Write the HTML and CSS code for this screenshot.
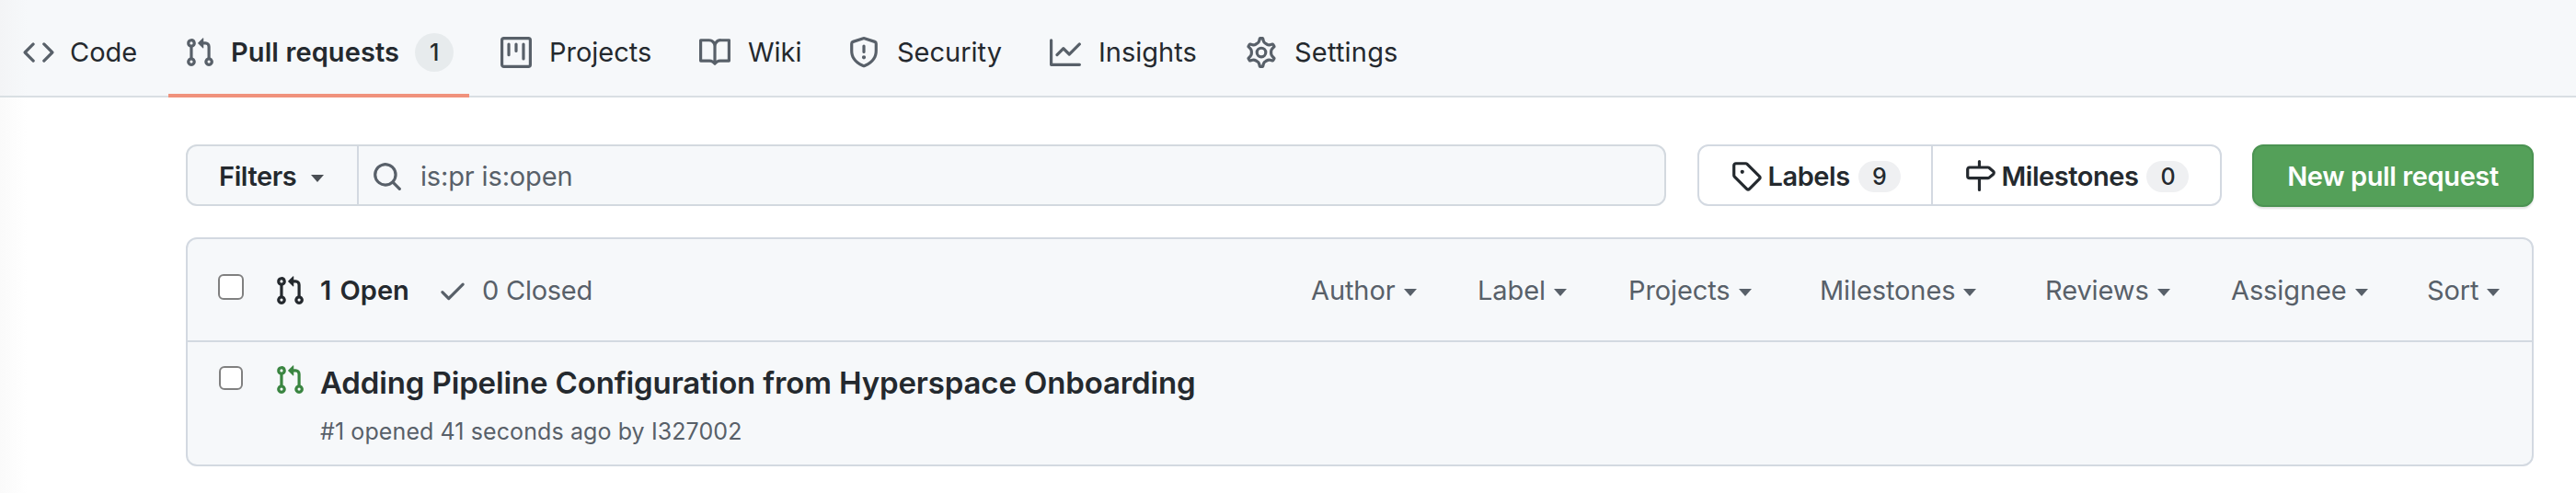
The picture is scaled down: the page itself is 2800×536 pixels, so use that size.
FILE: index.html
```html
<!DOCTYPE html>
<html lang="en">
<head>
<meta charset="utf-8">
<title>Pull requests</title>
<link rel="stylesheet" href="styles.css">
</head>
<body>
<svg width="0" height="0" class="sprite" aria-hidden="true">
  <symbol id="pr" viewBox="0 0 16 16"><path d="M7.177 3.073L9.573.677A.25.25 0 0110 .854v4.792a.25.25 0 01-.427.177L7.177 3.427a.25.25 0 010-.354zM3.75 2.5a.75.75 0 100 1.5.75.75 0 000-1.5zm-2.25.75a2.25 2.25 0 113 2.122v5.256a2.251 2.251 0 11-1.5 0V5.372A2.25 2.25 0 011.5 3.25zM11 2.5h-1V4h1a1 1 0 011 1v5.628a2.251 2.251 0 101.5 0V5A2.5 2.5 0 0011 2.5zm1 10.25a.75.75 0 111.5 0 .75.75 0 01-1.5 0zM3.75 12a.75.75 0 100 1.5.75.75 0 000-1.5z"/></symbol>
</svg>
<nav class="tabs">
  <a class="tab"><svg class="icon" viewBox="0 0 16 16"><path d="M4.72 3.22a.75.75 0 011.06 1.06L2.06 8l3.72 3.72a.75.75 0 11-1.06 1.06L.47 8.53a.75.75 0 010-1.06l4.25-4.25zm6.56 0a.75.75 0 10-1.06 1.06L13.94 8l-3.72 3.72a.75.75 0 101.06 1.06l4.25-4.25a.75.75 0 000-1.06l-4.25-4.25z"/></svg><span>Code</span></a>
  <a class="tab selected"><svg class="icon"><use href="#pr"/></svg><span class="tab-name">Pull requests</span><span class="count">1</span></a>
  <a class="tab"><svg class="icon" viewBox="0 0 16 16"><path d="M1.75 0A1.75 1.75 0 000 1.75v12.5C0 15.216.784 16 1.75 16h12.5A1.75 1.75 0 0016 14.25V1.75A1.75 1.75 0 0014.25 0H1.75zM1.5 1.75a.25.25 0 01.25-.25h12.5a.25.25 0 01.25.25v12.5a.25.25 0 01-.25.25H1.75a.25.25 0 01-.25-.25V1.75zM11.75 3a.75.75 0 00-.75.75v7.5a.75.75 0 001.5 0v-7.5a.75.75 0 00-.75-.75zm-8.25.75a.75.75 0 011.5 0v5.5a.75.75 0 01-1.5 0v-5.5zM8 3a.75.75 0 00-.75.75v3.5a.75.75 0 001.5 0v-3.5A.75.75 0 008 3z"/></svg><span>Projects</span></a>
  <a class="tab"><svg class="icon" viewBox="0 0 16 16"><path fill-rule="evenodd" d="M0 1.75A.75.75 0 01.75 1h4.253c1.227 0 2.317.59 3 1.501A3.744 3.744 0 0111.006 1h4.245a.75.75 0 01.75.75v10.5a.75.75 0 01-.75.75h-4.507a2.25 2.25 0 00-1.591.659l-.622.621a.75.75 0 01-1.06 0l-.622-.621A2.25 2.25 0 005.258 13H.75a.75.75 0 01-.75-.75V1.75zm8.755 3a2.25 2.25 0 012.25-2.25H14.5v9h-3.757c-.71 0-1.4.201-1.992.572l.004-7.322zm-1.504 7.324l.004-5.073-.002-2.253A2.25 2.25 0 005.003 2.5H1.5v9h3.757a3.75 3.75 0 011.994.574z"/></svg><span>Wiki</span></a>
  <a class="tab"><svg class="icon" viewBox="0 0 16 16"><path fill-rule="evenodd" d="M7.467.133a1.75 1.75 0 011.066 0l5.25 1.68A1.75 1.75 0 0115 3.48V7c0 1.566-.32 3.182-1.303 4.682-.983 1.498-2.585 2.813-5.032 3.855a1.7 1.7 0 01-1.33 0c-2.447-1.042-4.049-2.357-5.032-3.855C1.32 10.182 1 8.566 1 7V3.48a1.75 1.75 0 011.217-1.667l5.25-1.68zm.61 1.429a.25.25 0 00-.153 0l-5.25 1.68a.25.25 0 00-.174.238V7c0 1.358.275 2.666 1.057 3.86.784 1.194 2.121 2.34 4.366 3.297a.2.2 0 00.154 0c2.245-.956 3.582-2.104 4.366-3.298C13.225 9.666 13.5 8.36 13.5 7V3.48a.25.25 0 00-.174-.237l-5.25-1.68zM9 10.5a1 1 0 11-2 0 1 1 0 012 0zm-.25-5.75a.75.75 0 10-1.5 0v3a.75.75 0 001.5 0v-3z"/></svg><span>Security</span></a>
  <a class="tab"><svg class="icon" viewBox="0 0 16 16"><path d="M1.5 1.75a.75.75 0 00-1.5 0v12.5c0 .414.336.75.75.75h14.5a.75.75 0 000-1.5H1.5V1.75zm14.28 2.53a.75.75 0 00-1.06-1.06L10 7.94 7.53 5.47a.75.75 0 00-1.06 0L3.22 8.72a.75.75 0 001.06 1.06L7 7.06l2.47 2.47a.75.75 0 001.06 0l5.25-5.25z"/></svg><span>Insights</span></a>
  <a class="tab"><svg class="icon gear" viewBox="0 0 16 16"><path transform="translate(8 8) scale(1.115) translate(-8 -8)" stroke-width="1.35" d="M7.429 1.525a6.593 6.593 0 011.142 0c.036.003.108.036.137.146l.289 1.105c.147.56.55.967.997 1.189.174.086.341.183.501.29.417.278.97.423 1.53.27l1.102-.303c.11-.03.175.016.195.046.219.31.41.641.573.989.014.031.022.11-.059.19l-.815.806c-.411.406-.562.957-.53 1.456a4.588 4.588 0 010 .582c-.032.499.119 1.05.53 1.456l.815.806c.08.08.073.159.059.19a6.494 6.494 0 01-.573.99c-.02.029-.086.074-.195.045l-1.103-.303c-.559-.153-1.112-.008-1.529.27-.16.107-.327.204-.5.29-.449.222-.851.628-.998 1.189l-.289 1.105c-.029.11-.101.143-.137.146a6.613 6.613 0 01-1.142 0c-.036-.003-.108-.037-.137-.146l-.289-1.105c-.147-.56-.55-.967-.997-1.189a4.502 4.502 0 01-.501-.29c-.417-.278-.97-.423-1.53-.27l-1.102.303c-.11.03-.175-.016-.195-.046a6.492 6.492 0 01-.573-.989c-.014-.031-.022-.11.059-.19l.815-.806c.411-.406.562-.957.53-1.456a4.587 4.587 0 010-.582c.032-.499-.119-1.05-.53-1.456l-.815-.806c-.08-.08-.073-.159-.059-.19a6.44 6.44 0 01.573-.99c.02-.029.086-.075.195-.045l1.103.303c.559.153 1.112.008 1.529-.27.16-.107.327-.204.5-.29.449-.222.851-.628.998-1.189l.289-1.105c.029-.11.101-.143.137-.146z"/><circle cx="8" cy="8" r="2.25" stroke-width="1.5"/></svg><span>Settings</span></a>
</nav>
<main class="content">
  <div class="toolbar">
    <div class="search">
      <button class="filters">Filters<i class="caret"></i></button>
      <div class="query"><svg class="icon" viewBox="0 0 16 16"><path fill-rule="evenodd" d="M11.5 7a4.499 4.499 0 11-8.998 0A4.499 4.499 0 0111.5 7zm-.82 4.74a6 6 0 111.06-1.06l3.04 3.04a.75.75 0 11-1.06 1.06l-3.04-3.04z"/></svg><span>is:pr is:open</span></div>
    </div>
    <div class="links">
      <a class="link"><svg class="icon" viewBox="0 0 16 16"><path fill-rule="evenodd" d="M2.5 7.775V2.75a.25.25 0 01.25-.25h5.025a.25.25 0 01.177.073l6.25 6.25a.25.25 0 010 .354l-5.025 5.025a.25.25 0 01-.354 0l-6.25-6.25a.25.25 0 01-.073-.177zm-1.5 0V2.75C1 1.784 1.784 1 2.75 1h5.025c.464 0 .91.184 1.238.513l6.25 6.25a1.75 1.75 0 010 2.474l-5.026 5.026a1.75 1.75 0 01-2.474 0l-6.25-6.25A1.75 1.75 0 011 7.775zM6 5a1 1 0 100 2 1 1 0 000-2z"/></svg><span class="link-name">Labels</span><span class="count">9</span></a>
      <a class="link"><svg class="icon" viewBox="0 0 16 16"><path fill-rule="evenodd" d="M7.75 0a.75.75 0 01.75.75V3h3.634c.414 0 .814.147 1.13.414l2.07 1.75a1.75 1.75 0 010 2.672l-2.07 1.75a1.75 1.75 0 01-1.13.414H8.5v5.25a.75.75 0 11-1.5 0V10H2.75A1.75 1.75 0 011 8.25v-3.5C1 3.784 1.784 3 2.75 3H7V.75A.75.75 0 017.75 0zm0 8.5h4.384a.25.25 0 00.161-.06l2.07-1.75a.25.25 0 000-.38l-2.07-1.75a.25.25 0 00-.161-.06H2.75a.25.25 0 00-.25.25v3.5c0 .138.112.25.25.25h5z"/></svg><span class="link-name">Milestones</span><span class="count">0</span></a>
    </div>
    <button class="create">New pull request</button>
  </div>
  <section class="list">
    <header class="list-head">
      <span class="checkbox"></span>
      <svg class="icon"><use href="#pr"/></svg>
      <span class="open">1 Open</span>
      <svg class="icon check" viewBox="0 0 16 16"><path d="M13.78 4.22a.75.75 0 010 1.06l-7.25 7.25a.75.75 0 01-1.06 0L2.22 9.28a.75.75 0 011.06-1.06L6 10.94l6.72-6.72a.75.75 0 011.06 0z"/></svg>
      <span class="closed">0 Closed</span>
      <div class="menus">
        <span>Author<i class="caret"></i></span>
        <span>Label<i class="caret"></i></span>
        <span>Projects<i class="caret"></i></span>
        <span>Milestones<i class="caret"></i></span>
        <span>Reviews<i class="caret"></i></span>
        <span>Assignee<i class="caret"></i></span>
        <span>Sort<i class="caret"></i></span>
      </div>
    </header>
    <article class="row">
      <span class="checkbox small"></span>
      <svg class="icon"><use href="#pr"/></svg>
      <div class="row-text">
        <h3 class="title">Adding Pipeline Configuration from Hyperspace Onboarding</h3>
        <p class="meta">#1 opened 41 seconds ago by I327002</p>
      </div>
    </article>
  </section>
</main>
</body>
</html>
```

FILE: styles.css
```css
* { box-sizing: border-box; }

body {
  margin: 0;
  width: 2800px;
  height: 536px;
  overflow: hidden;
  background: linear-gradient(90deg, #fafafa, #fff 30px);
  color: #24292e;
  font: 29px/42px Inter, "Liberation Sans", sans-serif;
  white-space: nowrap;
}

.sprite { display: block; width: 0; height: 0; }

.icon { width: 34px; height: 34px; flex: none; fill: currentColor; }

.caret {
  flex: none;
  border: 7.5px solid transparent;
  border-top: 8px solid currentColor;
  border-bottom: 0;
}

.count {
  display: flex;
  align-items: center;
  justify-content: center;
  font-size: 25px;
  font-weight: 500;
}

/* Repository tabs */
.tabs {
  display: grid;
  grid-template-columns: 158px 361px 216px 162px 219px 213px auto;
  height: 106px;
  padding-left: 25px;
  border-bottom: 2px solid #d9dfe3;
  background: linear-gradient(90deg, #f3f4f6, #f6f8fa 30px);
}
.tab { display: flex; align-items: center; gap: 19px; padding-top: 8px; height: 106px; }
.tab:first-child { gap: 17px; }
.tab .icon { color: #586069; }
.tab.selected {
  width: 327px;
  gap: 17px;
  padding: 8px 17px 0;
  font-weight: 600;
  background: linear-gradient(#f0927c, #f0927c) bottom / 100% 4px no-repeat;
}
.tab .count { width: 42px; height: 42px; border-radius: 21px; background: #e7ebed; }
.tab-name { width: 184px; letter-spacing: .1px; }
.gear { fill: none; stroke: currentColor; }
.tab:last-child { letter-spacing: .2px; }

/* Search and actions */
.content { padding: 51px 46px 0 202px; }
.toolbar { display: flex; align-items: flex-start; }
.search {
  display: flex;
  width: 1609px;
  height: 67px;
  margin-right: 34px;
  border: 2px solid #d3d9df;
  border-radius: 12px;
  background: #f6f8fa;
}
.filters {
  display: flex;
  align-items: center;
  gap: 16px;
  width: 186px;
  padding: 3px 0 0 34px;
  border: 0;
  border-right: 2px solid #d3d9e1;
  background: none;
  color: inherit;
  font: inherit;
  font-weight: 600;
  letter-spacing: -.4px;
}
.filters .caret { margin-top: 4px; color: #4a4f54; }
.query { display: flex; align-items: center; gap: 19px; padding: 3px 0 0 14px; color: #586069; letter-spacing: -.15px; }
.links {
  display: flex;
  height: 67px;
  width: 570px;
  margin-right: 33px;
  border: 2px solid #d3d9e1;
  border-radius: 12px;
  font-weight: 600;
  letter-spacing: -.45px;
}
.link { display: flex; align-items: center; padding: 2px 0 0 34px; }
.link:first-child { width: 254px; border-right: 2px solid #d3d9e1; }
.link .icon { margin-top: -1px; }
.link-name { margin-left: 6.5px; }
.link .count { width: 46px; height: 34px; margin-left: 9px; border-radius: 17px; background: #eff0f2; }
.create {
  width: 306px;
  height: 68px;
  padding: 1px 0 0;
  border: 2px solid #4b9352;
  border-radius: 12px;
  background: #54a059;
  color: #fff;
  font: inherit;
  font-weight: 600;
  letter-spacing: -.4px;
  box-shadow: 0 2px 2px rgba(27, 31, 35, .12);
}

/* Pull request list */
.list {
  height: 249px;
  margin-top: 33px;
  border: 2px solid #d3d9e1;
  border-radius: 12px;
  background: #f6f8fa;
}
.checkbox {
  flex: none;
  width: 28px;
  height: 28px;
  border: 2px solid #808080;
  border-radius: 6px;
  background: #fff;
}
.checkbox.small { width: 26px; height: 26px; }
.list-head {
  display: flex;
  align-items: flex-start;
  height: 112px;
  padding: 38px 0 0 33px;
  border-bottom: 2px solid #d3d9e1;
}
.list-head .icon { margin: 1px 0 0 33px; }
.open { margin: -3px 0 0 16px; font-weight: 600; width: 98px; word-spacing: 2px; }
.list-head .check { margin: 1px 0 0 29px; color: #586069; }
.closed { margin: -3px 0 0 15px; color: #586069; letter-spacing: -.25px; }
.menus {
  display: grid;
  grid-template-columns: 181px 164px 208px 245px 202px 213px 84px;
  margin: -3px 30px 0 auto;
  color: #586069;
  letter-spacing: -.1px;
}
.menus span { display: flex; align-items: center; gap: 9px; }
.menus .caret { margin-top: 3px; }
.row { display: flex; padding: 26px 0 0 34px; }
.row .icon { margin: -2px 0 0 34px; color: #3a8541; }
.row-text { margin-left: 16px; }
.title { margin: -4px 0 0; font-size: 33px; line-height: 44px; font-weight: 600; letter-spacing: -.14px; }
.meta { margin: 14px 0 0; font-size: 25px; line-height: 34px; color: #586069; letter-spacing: .1px; }
```
